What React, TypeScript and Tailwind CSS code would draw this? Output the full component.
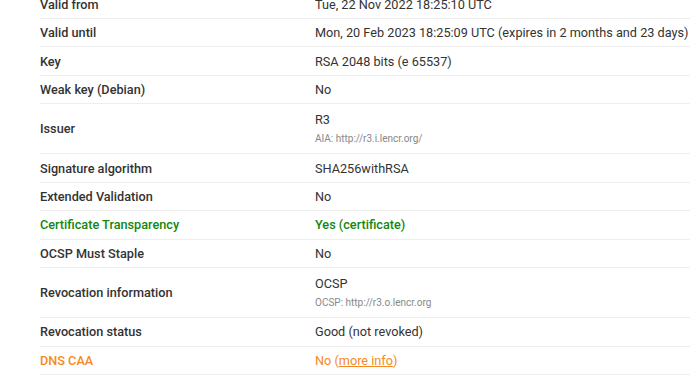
type Tone = "normal" | "good" | "warn";

interface CertRow {
  label: string;
  value: React.ReactNode;
  note?: string;
  tone?: Tone;
}

const labelTone: Record<Tone, string> = {
  normal: "text-[#333333]",
  good: "text-[#118811]",
  warn: "text-[#f58a1e]",
};

const rows: CertRow[] = [
  { label: "Valid from", value: "Tue, 22 Nov 2022 18:25:10 UTC" },
  {
    label: "Valid until",
    value: "Mon, 20 Feb 2023 18:25:09 UTC (expires in 2 months and 23 days)",
  },
  { label: "Key", value: "RSA 2048 bits (e 65537)" },
  { label: "Weak key (Debian)", value: "No" },
  { label: "Issuer", value: "R3", note: "AIA: http://r3.i.lencr.org/" },
  { label: "Signature algorithm", value: "SHA256withRSA" },
  { label: "Extended Validation", value: "No" },
  {
    label: "Certificate Transparency",
    value: <span className="font-medium">Yes (certificate)</span>,
    tone: "good",
  },
  { label: "OCSP Must Staple", value: "No" },
  {
    label: "Revocation information",
    value: "OCSP",
    note: "OCSP: http://r3.o.lencr.org",
  },
  { label: "Revocation status", value: "Good (not revoked)" },
  {
    label: "DNS CAA",
    value: (
      <>
        No (<a href="#" className="underline">more info</a>)
      </>
    ),
    tone: "warn",
  },
];

function Row({ row }: { row: CertRow }) {
  const tone = row.tone ?? "normal";
  return (
    <div
      className={`flex items-center border-b border-[#eeeeee] ${
        row.note ? "h-[50px]" : "h-[28.45px]"
      }`}
    >
      <div className={`w-[275px] shrink-0 font-medium ${labelTone[tone]}`}>
        {row.label}
      </div>
      <div className={tone === "normal" ? "text-[#333333]" : labelTone[tone]}>
        <div>{row.value}</div>
        {row.note && (
          <div className="mt-[4px] text-[10px] leading-[14px] text-[#888888]">
            {row.note}
          </div>
        )}
      </div>
    </div>
  );
}

export default function App() {
  return (
    <div className="h-[382px] w-[690px] overflow-hidden bg-white font-['Roboto',sans-serif] text-[12.7px] leading-[17px]">
      <div className="-mt-[9.4px] ml-10 w-[700px]">
        {rows.map((row) => (
          <Row key={row.label} row={row} />
        ))}
      </div>
    </div>
  );
}
